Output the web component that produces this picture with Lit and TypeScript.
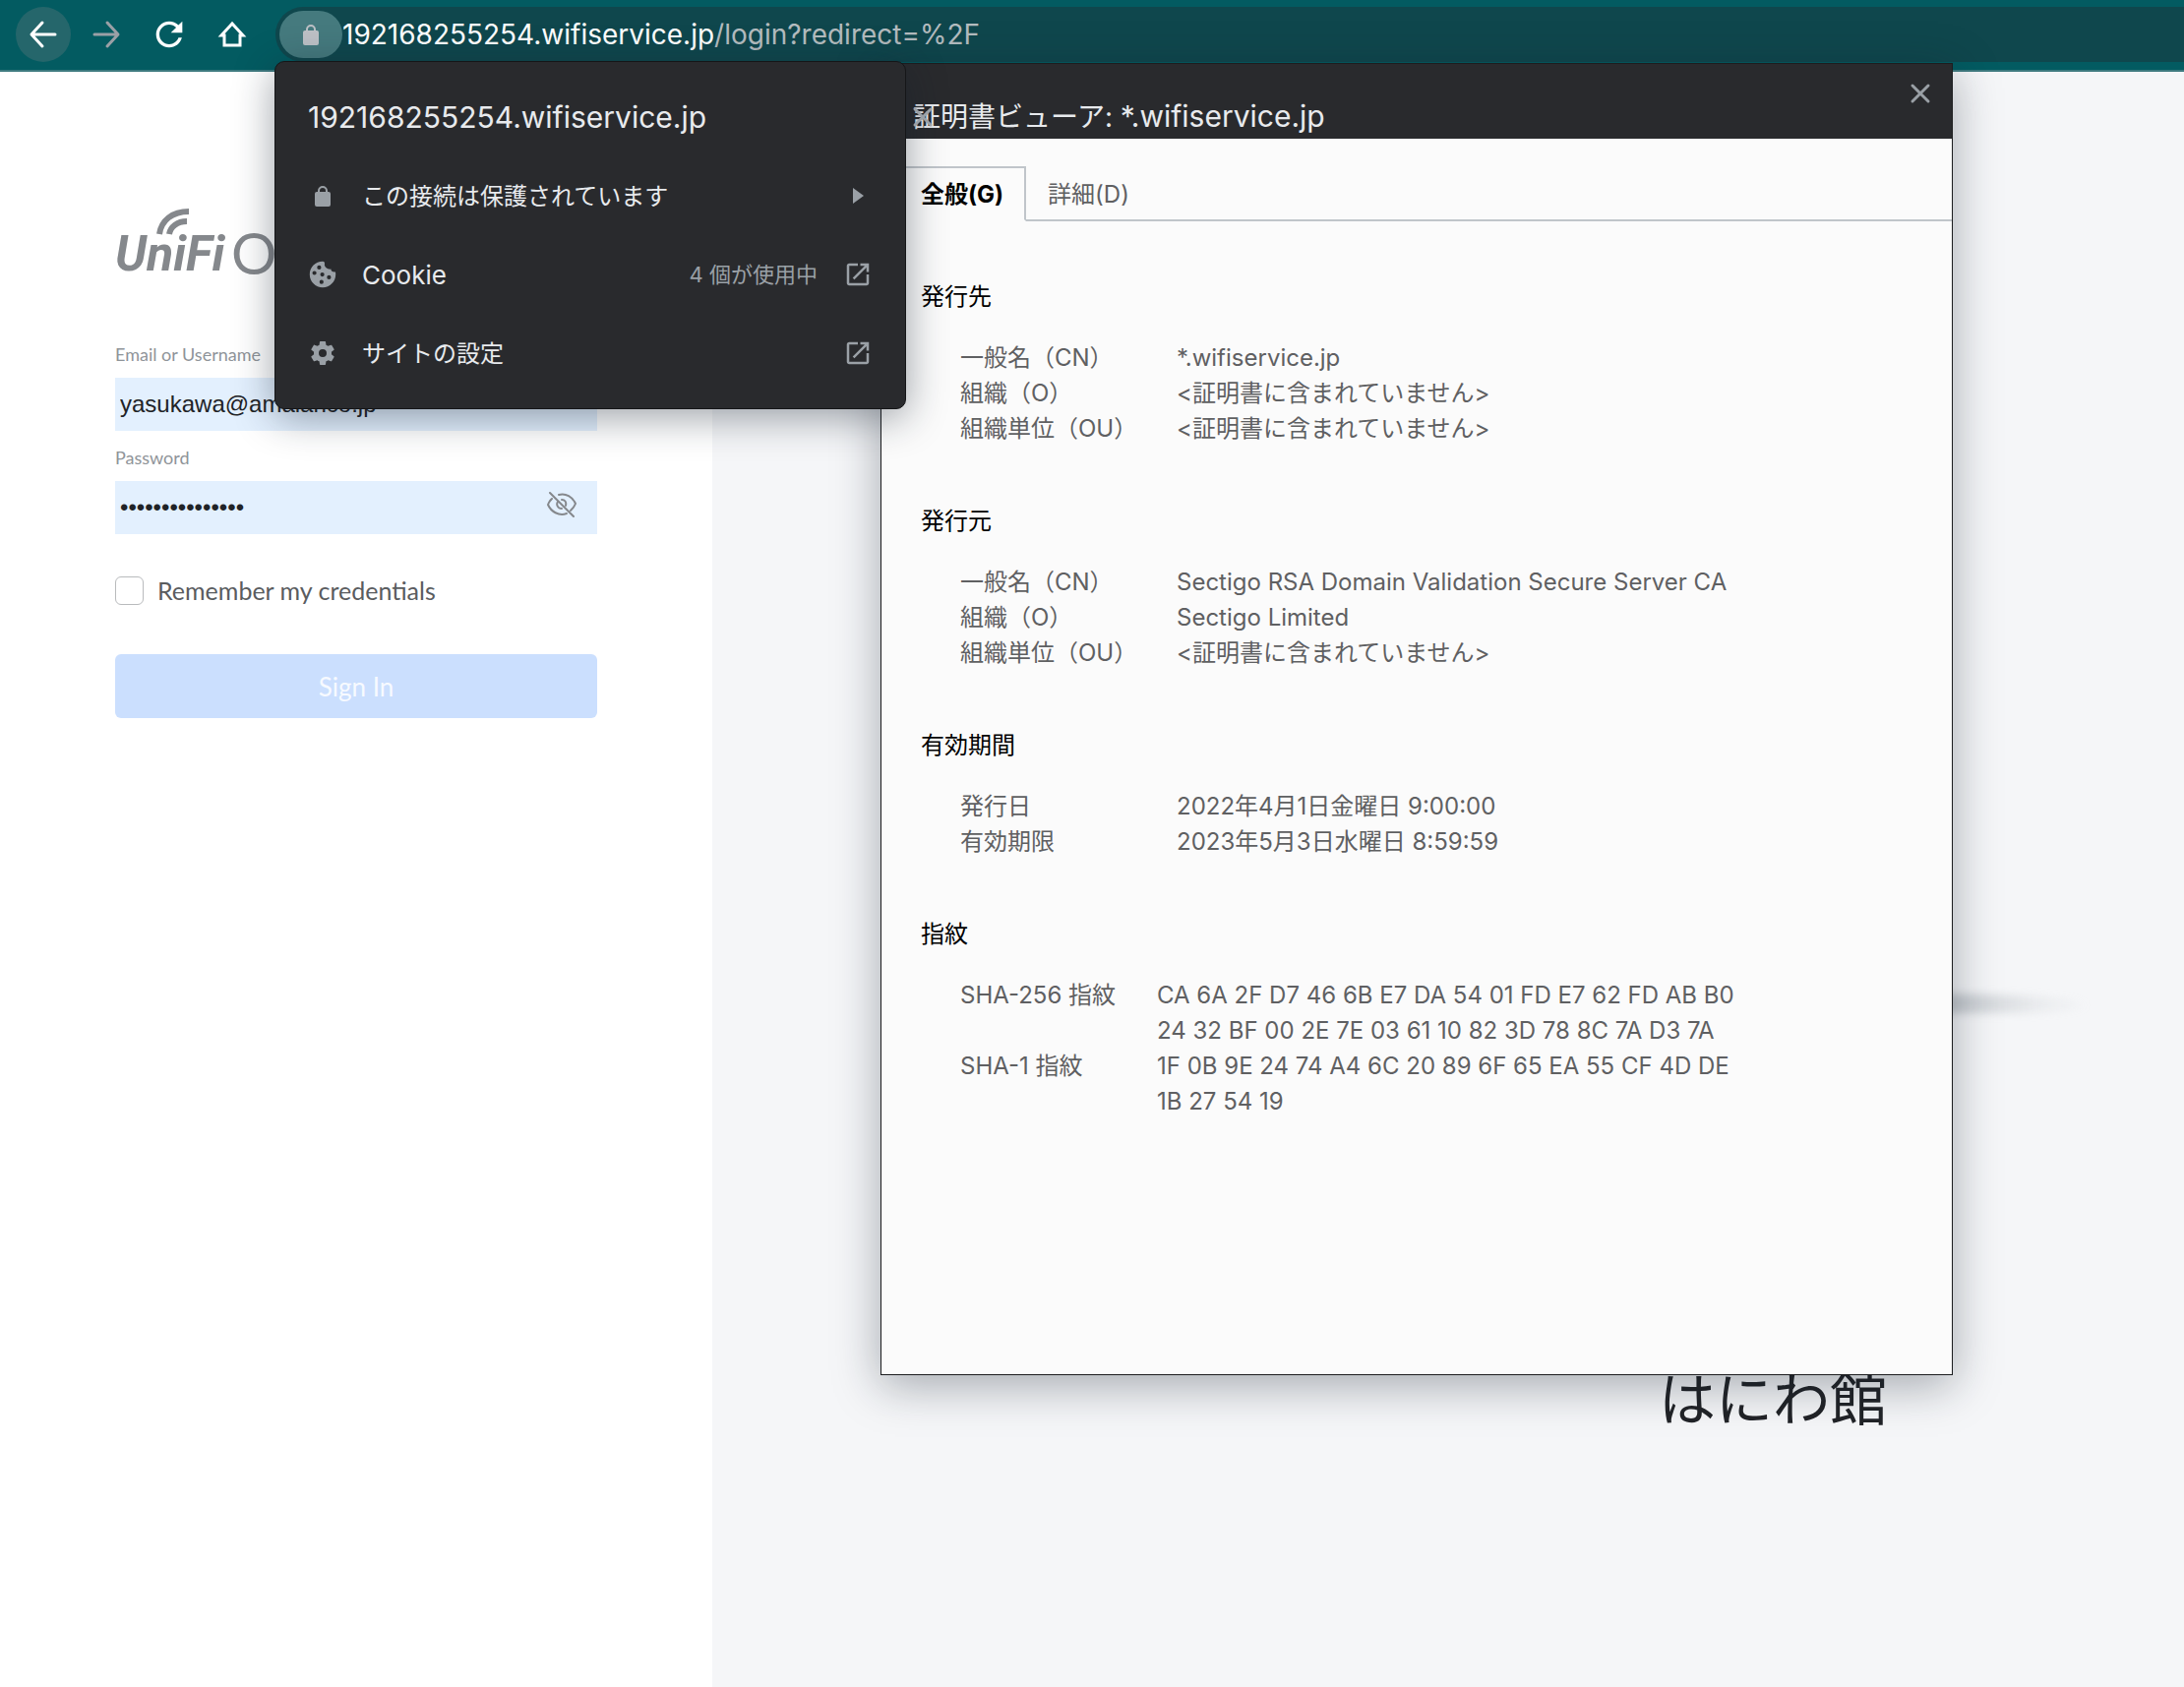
import { LitElement, html, css, svg } from "lit";
import { customElement } from "lit/decorators.js";

const gearPath =
  "M19.14 12.94c.04-.3.06-.61.06-.94 0-.32-.02-.64-.07-.94l2.03-1.58c.18-.14.23-.41.12-.61l-1.92-3.32c-.12-.22-.37-.29-.59-.22l-2.39.96c-.5-.38-1.03-.7-1.62-.94L14.4 2.81c-.04-.24-.24-.41-.48-.41h-3.84c-.24 0-.43.17-.47.41L9.25 5.35C8.66 5.59 8.12 5.92 7.63 6.29L5.24 5.33c-.22-.08-.47 0-.59.22L2.74 8.87c-.12.21-.08.47.12.61l2.03 1.58C4.84 11.36 4.8 11.69 4.8 12s.02.64.07.94l-2.03 1.58c-.18.14-.23.41-.12.61l1.92 3.32c.12.22.37.29.59.22l2.39-.96c.5.38 1.03.7 1.62.94l.36 2.54c.05.24.24.41.48.41h3.84c.24 0 .44-.17.47-.41l.36-2.54c.59-.24 1.13-.56 1.62-.94l2.39.96c.22.08.47 0 .59-.22l1.92-3.32c.12-.22.07-.47-.12-.61zM12 15.2a3.2 3.2 0 1 1 0-6.4 3.2 3.2 0 0 1 0 6.4z";
const openPath =
  "M19 19H5V5h7V3H5c-1.11 0-2 .9-2 2v14c0 1.1.89 2 2 2h14c1.1 0 2-.9 2-2v-7h-2v7zM14 3v2h3.59l-9.83 9.83 1.41 1.41L19 6.41V10h2V3h-7z";
const reloadPath =
  "M17.65 6.35C16.2 4.9 14.21 4 12 4c-4.42 0-7.99 3.58-7.99 8s3.57 8 7.99 8c3.73 0 6.84-2.55 7.73-6h-2.08c-.82 2.33-3.04 4-5.65 4-3.31 0-6-2.69-6-6s2.69-6 6-6c1.66 0 3.14.69 4.22 1.78L13 11h7V4l-2.35 2.35z";

const line = (d: string, width: number) =>
  svg`<path d=${d} fill="none" stroke="currentColor" stroke-width=${width} stroke-linecap="round" stroke-linejoin="round"/>`;

const icon = (size: number, content: unknown) =>
  html`<svg width=${size} height=${size} viewBox="0 0 ${size} ${size}" aria-hidden="true">${content}</svg>`;

const materialIcon = (size: number, d: string) =>
  html`<svg width=${size} height=${size} viewBox="0 0 24 24" aria-hidden="true"><path fill="currentColor" fill-rule="evenodd" d=${d}></path></svg>`;

const closeIcon = icon(24, line("M4 4L20 20M20 4L4 20", 3));
const lockIcon = icon(
  24,
  svg`<rect x="4" y="8" width="16" height="15" rx="2" fill="currentColor"/><path d="M8 9V7a4 4 0 0 1 8 0v2" fill="none" stroke="currentColor" stroke-width="2"/>`
);
const cookieIcon = icon(
  28,
  svg`<path fill="currentColor" fill-rule="evenodd" d="M14 .8C6.700 .8 .8 6.700 .8 14S6.700 27.200 14 27.200 27.200 21.300 27.200 14c0-.9-.1-1.700-.2-2.500-1.300.2-2.800 0-3.600-.7-.7-.5-1-1.200-1-2.200-1.900.2-3.600-.2-4.800-1.300-1.400-1.200-2-2.700-1.600-4.300.1-.8-.2-1.600-.7-2.100zM10.400 4.800a2.100 2.100 0 1 1 0 4.200 2.100 2.100 0 0 1 0-4.200zM5.600 10.400a2.100 2.100 0 1 1 0 4.200 2.100 2.100 0 0 1 0-4.200zM13.600 12a2.100 2.100 0 1 1 0 4.200 2.100 2.100 0 0 1 0-4.200zM20.400 14.800a2.100 2.100 0 1 1 0 4.200 2.100 2.100 0 0 1 0-4.200zM12.800 19.600a2.100 2.100 0 1 1 0 4.200 2.100 2.100 0 0 1 0-4.200z"/>`
);

@customElement("browser-toolbar")
export class BrowserToolbar extends LitElement {
  static styles = css`
    :host {
      display: block;
      font-family: Inter, "Noto Sans CJK JP", sans-serif;
    }
    .bar {
      display: flex;
      align-items: flex-start;
      gap: 8px;
      padding: 7px 0 8px 16px;
      background: #035b61;
      border-bottom: 2px solid #3e7a7f;
    }
    .nav {
      display: grid;
      place-items: center;
      width: 56px;
      height: 56px;
      padding: 0;
      border: 0;
      border-radius: 50%;
      background: none;
      color: #fff;
    }
    .nav.active {
      background: #25666b;
    }
    .nav.muted {
      color: #9aa0a6;
    }
    .omnibox {
      flex: 1;
      display: flex;
      align-items: center;
      height: 56px;
      margin-left: 8px;
      padding-left: 4px;
      border-radius: 28px 0 0 28px;
      background: #0f474d;
    }
    .chip {
      display: grid;
      place-items: center;
      width: 64px;
      height: 48px;
      padding: 0;
      border: 0;
      border-radius: 24px;
      background: #457a7e;
      color: #bdc1c6;
    }
    .url {
      font-size: 28px;
      line-height: 56px;
      color: #fff;
      white-space: nowrap;
    }
    .path {
      color: #b4bcbf;
    }
  `;

  render() {
    return html`
      <nav class="bar" aria-label="ブラウザ">
        <button class="nav active" aria-label="戻る">${icon(32, line("M28 16H5M15 4L4 16L15 28", 3))}</button>
        <button class="nav muted" aria-label="進む">${icon(32, line("M4 16H27M17 4L28 16L17 28", 3))}</button>
        <button class="nav" aria-label="再読み込み">${materialIcon(40, reloadPath)}</button>
        <button class="nav" aria-label="ホーム">
          ${icon(
            32,
            svg`<path d="M16 5L5 17H8V27H24V17H27Z" fill="none" stroke="currentColor" stroke-width="3" stroke-linejoin="miter"/>`
          )}
        </button>
        <div class="omnibox">
          <button class="chip" aria-label="サイト情報">${lockIcon}</button>
          <span class="url">192168255254.wifiservice.jp<span class="path">/login?redirect=%2F</span></span>
        </div>
      </nav>
    `;
  }
}

@customElement("login-form")
export class LoginForm extends LitElement {
  static styles = css`
    :host {
      display: block;
      font-family: Lato, sans-serif;
    }
    .form {
      display: flex;
      flex-direction: column;
      padding: 128px 117px 0;
    }
    .logo {
      display: flex;
      align-items: flex-end;
      gap: 8px;
      position: relative;
      height: 88px;
      color: #85888c;
      white-space: nowrap;
    }
    .brand {
      width: 110px;
      font: italic 700 50px/62px Roboto, sans-serif;
    }
    .waves {
      position: absolute;
      left: 41px;
      top: 10px;
    }
    .product {
      font-size: 58px;
      line-height: 64px;
      font-weight: 400;
    }
    .label {
      margin-top: 59px;
      font-size: 18px;
      line-height: 24px;
      color: #8f9499;
    }
    .label.next {
      margin-top: 15px;
    }
    .field {
      display: flex;
      align-items: center;
      height: 54px;
      margin-top: 12px;
      background: #e3f0fe;
    }
    .input {
      flex: 1;
      min-width: 0;
      height: 54px;
      box-sizing: border-box;
      padding: 0 5px;
      border: 0;
      outline: 0;
      background: none;
      color: #212327;
      font: 24px/54px "Liberation Sans", Arial, sans-serif;
    }
    .eye {
      display: grid;
      padding: 0;
      margin: 0 20px 6px 0;
      border: 0;
      background: none;
      color: #85888c;
    }
    .remember {
      display: flex;
      align-items: center;
      gap: 14px;
      margin-top: 42px;
      font-size: 25px;
      line-height: 30px;
      color: #5a5c5f;
    }
    .check {
      appearance: none;
      width: 29px;
      height: 29px;
      margin: 0;
      border: 1px solid #b9bbbd;
      border-radius: 6px;
      background: #fff;
    }
    .submit {
      height: 65px;
      margin-top: 50px;
      padding: 0;
      border: 0;
      border-radius: 6px;
      background: #cbdffe;
      color: #f7faff;
      font: 26px/64px Lato, sans-serif;
    }
  `;

  render() {
    return html`
      <form class="form">
        <div class="logo">
          <svg class="waves" width="38" height="30" viewBox="0 0 38 30" aria-hidden="true">
            <path d="M4 27C6 13 17 4 34 4" fill="none" stroke="currentColor" stroke-width="6"></path>
            <path d="M14 27C15 20 22 14 32 14" fill="none" stroke="currentColor" stroke-width="6"></path>
          </svg>
          <span class="brand">UniFi</span><span class="product">O</span>
        </div>
        <label class="label" for="user">Email or Username</label>
        <div class="field"><input class="input" id="user" type="text" value="yasukawa@amalanco.jp" /></div>
        <label class="label next" for="pass">Password</label>
        <div class="field">
          <input class="input" id="pass" type="password" value="passwordhidden1" />
          <button class="eye" type="button" aria-label="Show password">
            ${icon(
              32,
              svg`${line("M13 6C20 4 27 8 30 15C29 18 27 20 25 22M21 25C13 28 5 23 2 16C3 13 4 12 6 10", 2)}
              ${line("M12 13C10 16 12 20 16 20M16 11C19 11 21 13 20 17", 2)}
              ${line("M4 4L28 28", 2)}`
            )}
          </button>
        </div>
        <label class="remember"><input class="check" type="checkbox" />Remember my credentials</label>
        <button class="submit" type="button">Sign In</button>
      </form>
    `;
  }
}

@customElement("site-info-popup")
export class SiteInfoPopup extends LitElement {
  static styles = css`
    :host {
      display: block;
      box-sizing: border-box;
      padding: 16px 0;
      border: 1px solid #151618;
      border-radius: 10px;
      background: #292a2d;
      box-shadow: 0 8px 40px rgba(20, 30, 45, 0.42);
      color: #e8eaed;
      font: 24px/80px Inter, "Noto Sans CJK JP", sans-serif;
    }
    .row {
      display: flex;
      align-items: center;
      width: 100%;
      height: 80px;
      padding: 0 33px;
      border: 0;
      background: none;
      color: inherit;
      font: inherit;
      text-align: left;
    }
    .title {
      flex: 1;
      margin: 0;
      font-size: 30px;
      font-weight: 400;
    }
    .close {
      display: grid;
      place-items: center;
      width: 30px;
      height: 30px;
      padding: 0;
      border: 0;
      background: none;
      color: #9aa0a6;
    }
    .lead,
    .tail {
      display: grid;
      place-items: center;
      width: 30px;
      color: #9aa0a6;
    }
    .name {
      flex: 1;
      padding: 2px 0 0 25px;
    }
    .latin {
      font-size: 26px;
    }
    .note {
      padding-right: 26px;
      font-size: 22px;
      color: #9aa0a6;
    }
  `;

  render() {
    const rows = [
      { lead: lockIcon, name: "この接続は保護されています", latin: false, note: "", tail: icon(24, svg`<path fill="currentColor" d="M7 4L18 12L7 20Z"/>`) },
      { lead: cookieIcon, name: "Cookie", latin: true, note: "4 個が使用中", tail: materialIcon(30, openPath) },
      { lead: materialIcon(30, gearPath), name: "サイトの設定", latin: false, note: "", tail: materialIcon(30, openPath) },
    ];
    return html`
      <div class="row">
        <h2 class="title">192168255254.wifiservice.jp</h2>
        <button class="close" aria-label="閉じる">${closeIcon}</button>
      </div>
      ${rows.map(
        (r) => html`<button class="row">
          <span class="lead">${r.lead}</span><span class=${r.latin ? "name latin" : "name"}>${r.name}</span>
          ${r.note ? html`<span class="note">${r.note}</span>` : ""}
          <span class="tail">${r.tail}</span>
        </button>`
      )}
    `;
  }
}

const missing = "<証明書に含まれていません>";
const groups = [
  { title: "発行先", wide: false, rows: [["一般名（CN）", "*.wifiservice.jp"], ["組織（O）", missing], ["組織単位（OU）", missing]] },
  {
    title: "発行元",
    wide: false,
    rows: [["一般名（CN）", "Sectigo RSA Domain Validation Secure Server CA"], ["組織（O）", "Sectigo Limited"], ["組織単位（OU）", missing]],
  },
  { title: "有効期間", wide: false, rows: [["発行日", "2022年4月1日金曜日 9:00:00"], ["有効期限", "2023年5月3日水曜日 8:59:59"]] },
  {
    title: "指紋",
    wide: true,
    rows: [
      ["SHA-256 指紋", "CA 6A 2F D7 46 6B E7 DA 54 01 FD E7 62 FD AB B0\n24 32 BF 00 2E 7E 03 61 10 82 3D 78 8C 7A D3 7A"],
      ["SHA-1 指紋", "1F 0B 9E 24 74 A4 6C 20 89 6F 65 EA 55 CF 4D DE\n1B 27 54 19"],
    ],
  },
];

@customElement("certificate-dialog")
export class CertificateDialog extends LitElement {
  static styles = css`
    :host {
      display: block;
      box-sizing: border-box;
      border: 1px solid #1c1d1f;
      background: #fbfbfb;
      box-shadow: 0 10px 44px rgba(20, 30, 45, 0.36);
      color: #5f6062;
      font: 24px/36px Inter, "Noto Sans CJK JP", sans-serif;
    }
    .head {
      display: flex;
      justify-content: space-between;
      align-items: flex-start;
      padding: 18px 20px 2px 32px;
      background: #292a2d;
      color: #e8eaed;
    }
    .title {
      margin: 0;
      padding-top: 16px;
      font-size: 28px;
      line-height: 40px;
      font-weight: 400;
    }
    .host {
      font-size: 30px;
      line-height: 32px;
    }
    .close {
      display: grid;
      padding: 0;
      border: 0;
      background: none;
      color: #9aa0a6;
    }
    .tabs {
      display: flex;
      padding-top: 28px;
    }
    .tab {
      padding: 2px 22px 0;
      border: 0;
      border-top: 2px solid transparent;
      border-bottom: 2px solid #c0c5ca;
      background: none;
      color: inherit;
      font: inherit;
      line-height: 50px;
    }
    .tab.on {
      padding-left: 40px;
      padding-right: 21px;
      border-top-color: #c0c5ca;
      border-right: 2px solid #c0c5ca;
      border-bottom-color: transparent;
      color: #000;
      font-weight: 700;
    }
    .rest {
      flex: 1;
      border-bottom: 2px solid #c0c5ca;
    }
    .body {
      display: flex;
      flex-direction: column;
      gap: 58px;
      padding: 59px 40px 259px;
    }
    .group {
      margin: 0;
    }
    .name {
      margin: 0 0 26px;
      color: #000;
      font-size: 24px;
      line-height: 36px;
      font-weight: 400;
    }
    .list {
      display: grid;
      grid-template-columns: 220px 1fr;
      margin: 0;
      padding-left: 40px;
    }
    .list.wide {
      grid-template-columns: 200px 1fr;
    }
    .value {
      margin: 0;
      white-space: pre-line;
    }
  `;

  render() {
    return html`
      <header class="head">
        <h1 class="title">証明書ビューア: <span class="host">*.wifiservice.jp</span></h1>
        <button class="close" aria-label="閉じる">${closeIcon}</button>
      </header>
      <div class="tabs" role="tablist">
        <button class="tab on" role="tab" aria-selected="true">全般(G)</button>
        <button class="tab" role="tab" aria-selected="false">詳細(D)</button>
        <span class="rest"></span>
      </div>
      <div class="body">
        ${groups.map(
          (g) => html`<section class="group">
            <h2 class="name">${g.title}</h2>
            <dl class=${g.wide ? "list wide" : "list"}>
              ${g.rows.map(([k, v]) => html`<dt>${k}</dt><dd class="value">${v}</dd>`)}
            </dl>
          </section>`
        )}
      </div>
    `;
  }
}

@customElement("app-root")
export class AppRoot extends LitElement {
  static styles = css`
    :host {
      display: block;
      position: relative;
      overflow: hidden;
    }
    .page {
      display: flex;
      flex-direction: column;
      min-height: 100vh;
    }
    .content {
      flex: 1;
      display: flex;
    }
    .side {
      flex: 0 0 724px;
      background: #fff;
    }
    .stage {
      flex: 1;
      display: flex;
      flex-direction: column;
      justify-content: flex-end;
      align-items: flex-end;
      padding: 0 302px 264px 0;
      box-sizing: border-box;
      background: #f5f6f8;
    }
    .venue {
      margin: 0;
      color: #212327;
      font: 58px/64px "Noto Sans CJK JP", sans-serif;
    }
    .glow {
      position: absolute;
      left: 1860px;
      top: 1010px;
      width: 264px;
      height: 20px;
      border-radius: 0 100% 60% 0;
      background: linear-gradient(to right, rgba(150, 158, 165, 0.5) 45%, rgba(190, 195, 200, 0.2) 80%, transparent);
      filter: blur(4px);
    }
    .dialog {
      position: absolute;
      left: 895px;
      top: 64px;
      width: 1090px;
    }
    .popup {
      position: absolute;
      left: 279px;
      top: 62px;
      width: 642px;
    }
  `;

  render() {
    return html`
      <div class="page">
        <browser-toolbar></browser-toolbar>
        <main class="content">
          <login-form class="side"></login-form>
          <section class="stage"><p class="venue">はにわ館</p></section>
        </main>
      </div>
      <div class="glow"></div>
      <certificate-dialog class="dialog"></certificate-dialog>
      <site-info-popup class="popup"></site-info-popup>
    `;
  }
}
